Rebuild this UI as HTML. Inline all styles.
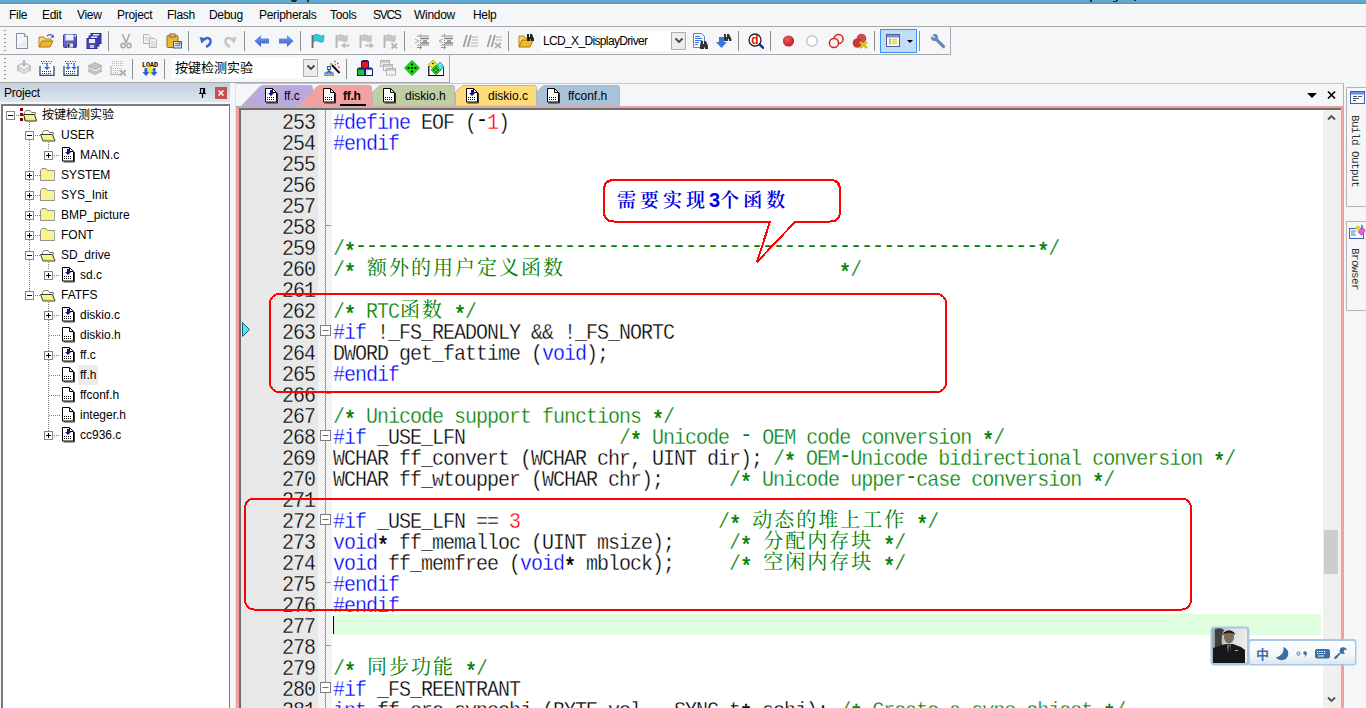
<!DOCTYPE html>
<html lang="zh"><head><meta charset="utf-8"><title>uVision</title>
<style>
*{box-sizing:border-box;margin:0;padding:0}
html,body{width:1366px;height:708px;overflow:hidden;background:#f5f6f7}
body{position:relative;font-family:"Liberation Sans","Noto Sans CJK SC",sans-serif;font-size:12px;color:#000}
.abs{position:absolute}
#topstrip{left:0;top:0;width:1366px;height:4px;background:#62a8ce;border-bottom:1px solid #5396ba}
.hl{position:absolute;height:1px;background:#a8a8a8}
.vl{position:absolute;width:1px;background:#a8a8a8}
.menu span{position:absolute;top:8px;font-size:12px;line-height:14px;white-space:nowrap;color:#000;letter-spacing:-.3px}
.sep{position:absolute;width:1px;height:20px;background:#8d8d8d}
.grip{position:absolute;width:2px;height:21px;background:repeating-linear-gradient(#9a9a9a 0 1px,transparent 1px 4px)}
.ico{position:absolute;width:16px;height:16px}
.combo{position:absolute;background:#fff;height:20px;font-size:12px;line-height:20px;white-space:nowrap}
.cbtn{position:absolute;width:15px;height:18px;background:#ececec;border:1px solid #adadad}
/* project */
#phead{left:0;top:83px;width:230px;height:19px;background:linear-gradient(#c2cfde,#dde6f0)}
#ptree{left:1px;top:104px;width:229px;height:606px;background:#fff;border:2px solid #7a7a7a;border-right-width:1px;border-bottom:0}
.tr{position:absolute;height:20px;line-height:20px;font-size:12px;white-space:nowrap}
/* editor */
#edwrap{left:236px;top:106px;width:1108px;height:610px;background:#f0a0a0}
#ed{left:239px;top:108px;width:1102px;height:610px;background:#fff;border-top:2px solid #6d6d6d;border-left:2px solid #6d6d6d}
#gutter{left:241px;top:110px;width:77px;height:600px;background:#e8e8e8}
#foldm{left:318px;top:110px;width:14px;height:600px;background:conic-gradient(#e8e8e8 25%,#fff 0 50%,#e8e8e8 0 75%,#fff 0) 0 0/2px 2px}
#foldline{left:325px;top:110px;width:1px;height:600px;background:#9a9a9a}
.num{position:absolute;left:241px;width:74px;text-align:right;font:20px/21px "Liberation Mono",monospace;letter-spacing:-1px;color:#000;height:21px;white-space:pre;transform:scaleY(1.1);transform-origin:0 0}
.cl{position:absolute;left:333px;font:20px/21px "Liberation Mono",monospace;letter-spacing:-1px;color:#000;height:21px;white-space:pre;transform:scaleY(1.1);transform-origin:0 0}
.cl{-webkit-text-stroke:.3px #fff}
.num{-webkit-text-stroke:.3px #e8e8e8}
.cl b{font-weight:normal;color:#0000ff}
.cl i{font-style:normal;color:#008000}
.cl u{text-decoration:none;color:#ff0000}
.cl .h{position:relative;top:-2px;-webkit-text-stroke:0}
.cl em{font-style:normal;position:relative;top:3px;-webkit-text-stroke:.5px currentColor}
.cl s{-webkit-text-stroke:0;text-decoration:none;font:400 20px/0 "Liberation Serif","Noto Serif CJK SC",serif;letter-spacing:2px;padding-left:1px;margin-right:-1px;color:#008000;display:inline-block;transform:scaleY(.91);vertical-align:baseline}
</style></head>
<body>
<div id="topstrip" class="abs"></div><div class="abs" style="left:0;top:4px;width:1366px;height:1px;background:#fdfdfd"></div>
<div class="abs" style="left:291px;top:0px;width:6px;height:1px;background:#2a2a30"></div>
<div class="abs" style="left:292px;top:1px;width:4px;height:1px;background:#2a2a30"></div>
<div class="abs" style="left:307px;top:0px;width:2px;height:2px;background:#2a2a30"></div>
<div class="abs" style="left:1090px;top:0px;width:2px;height:2px;background:#2a2a30"></div>
<div class="abs" style="left:1113px;top:1px;width:4px;height:1px;background:#2a2a30"></div>
<div class="abs" style="left:1116px;top:0px;width:2px;height:1px;background:#2a2a30"></div>
<div class="abs" style="left:1134px;top:0px;width:2px;height:1px;background:#2a2a30"></div>
<div class="menu"><span style="left:9px">File</span><span style="left:42px">Edit</span><span style="left:77px">View</span><span style="left:117px">Project</span><span style="left:167px">Flash</span><span style="left:209px">Debug</span><span style="left:259px">Peripherals</span><span style="left:330px">Tools</span><span style="left:373px"><span style="position:static;letter-spacing:-1.300px">SVCS</span></span><span style="left:414px">Window</span><span style="left:473px">Help</span></div>
<div class="hl" style="left:0;top:26px;width:1366px"></div>
<div class="hl" style="left:0;top:54px;width:951px"></div>
<div class="vl" style="left:950px;top:26px;height:29px"></div>
<div class="hl" style="left:0;top:82px;width:450px"></div>
<div class="hl" style="left:236px;top:83px;width:1108px;background:#c6c6c6"></div>
<div class="vl" style="left:449px;top:55px;height:28px"></div>
<div id="edwrap" class="abs"></div><div id="ed" class="abs"></div><div id="gutter" class="abs"></div><div id="foldm" class="abs"></div><div id="foldline" class="abs"></div>
<div class="abs" style="left:333px;top:614px;width:988px;height:21px;background:#dfffdf"></div>
<div class="num" style="top:111px">253</div>
<div class="cl" style="top:111px"><b>#define</b> EOF (<span class="h">-</span><u>1</u>)</div>
<div class="num" style="top:132px">254</div>
<div class="cl" style="top:132px"><b>#endif</b></div>
<div class="num" style="top:153px">255</div>
<div class="num" style="top:174px">256</div>
<div class="num" style="top:195px">257</div>
<div class="num" style="top:216px">258</div>
<div class="num" style="top:237px">259</div>
<div class="cl" style="top:237px"><i>/<em>*</em><span class="h">--------------------------------------------------------------</span><em>*</em>/</i></div>
<div class="num" style="top:258px">260</div>
<div class="cl" style="top:258px"><i>/<em>*</em> <s>额外的用户定义函数</s>                         <em>*</em>/</i></div>
<div class="num" style="top:279px">261</div>
<div class="num" style="top:300px">262</div>
<div class="cl" style="top:300px"><i>/<em>*</em> RTC<s>函数</s> <em>*</em>/</i></div>
<div class="num" style="top:321px">263</div>
<div class="cl" style="top:321px"><b>#if</b> !_FS_READONLY &amp;&amp; !_FS_NORTC</div>
<div class="num" style="top:342px">264</div>
<div class="cl" style="top:342px">DWORD get_fattime (<b>void</b>);</div>
<div class="num" style="top:363px">265</div>
<div class="cl" style="top:363px"><b>#endif</b></div>
<div class="num" style="top:384px">266</div>
<div class="num" style="top:405px">267</div>
<div class="cl" style="top:405px"><i>/<em>*</em> Unicode support functions <em>*</em>/</i></div>
<div class="num" style="top:426px">268</div>
<div class="cl" style="top:426px"><b>#if</b> _USE_LFN              <i>/<em>*</em> Unicode <span class="h">-</span> OEM code conversion <em>*</em>/</i></div>
<div class="num" style="top:447px">269</div>
<div class="cl" style="top:447px">WCHAR ff_convert (WCHAR chr, UINT dir); <i>/<em>*</em> OEM<span class="h">-</span>Unicode bidirectional conversion <em>*</em>/</i></div>
<div class="num" style="top:468px">270</div>
<div class="cl" style="top:468px">WCHAR ff_wtoupper (WCHAR chr);      <i>/<em>*</em> Unicode upper<span class="h">-</span>case conversion <em>*</em>/</i></div>
<div class="num" style="top:489px">271</div>
<div class="num" style="top:510px">272</div>
<div class="cl" style="top:510px"><b>#if</b> _USE_LFN == <u>3</u>                  <i>/<em>*</em> <s>动态的堆上工作</s> <em>*</em>/</i></div>
<div class="num" style="top:531px">273</div>
<div class="cl" style="top:531px"><b>void</b><em>*</em> ff_memalloc (UINT msize);     <i>/<em>*</em> <s>分配内存块</s> <em>*</em>/</i></div>
<div class="num" style="top:552px">274</div>
<div class="cl" style="top:552px"><b>void</b> ff_memfree (<b>void</b><em>*</em> mblock);     <i>/<em>*</em> <s>空闲内存块</s> <em>*</em>/</i></div>
<div class="num" style="top:573px">275</div>
<div class="cl" style="top:573px"><b>#endif</b></div>
<div class="num" style="top:594px">276</div>
<div class="cl" style="top:594px"><b>#endif</b></div>
<div class="num" style="top:615px">277</div>
<div class="num" style="top:636px">278</div>
<div class="num" style="top:657px">279</div>
<div class="cl" style="top:657px"><i>/<em>*</em> <s>同步功能</s> <em>*</em>/</i></div>
<div class="num" style="top:678px">280</div>
<div class="cl" style="top:678px"><b>#if</b> _FS_REENTRANT</div>
<div class="num" style="top:699px">281</div>
<div class="cl" style="top:699px"><b>int</b> ff_cre_syncobj (BYTE vol, _SYNC_t<em>*</em> sobj); <i>/<em>*</em> Create a sync object <em>*</em>/</i></div>
<svg class="abs" style="left:14px;top:33px" width="16" height="16" viewBox="0 0 16 16" ><path d="M2.5 .5h8l3 3v12h-11z" fill="#f4f6fb" stroke="#8a8fa0"/><path d="M10.5 .5v3h3" fill="#fff" stroke="#8a8fa0"/><path d="M4 13l8-6v7H4z" fill="#dfe4f2" opacity=".7"/></svg>
<svg class="abs" style="left:38px;top:33px" width="16" height="16" viewBox="0 0 16 16" ><path d="M1 14V4h5l1 2h6v3" fill="#f6d77a" stroke="#b8860b"/><path d="M1 14l3-6h11l-3 6z" fill="#f2b632" stroke="#a8760a"/><path d="M9 3c2-2 5-2 6 1" fill="none" stroke="#3a62b8" stroke-width="1.3"/><path d="M15.8 1.5v3.3h-3.3z" fill="#3a62b8"/></svg>
<svg class="abs" style="left:62px;top:33px" width="16" height="16" viewBox="0 0 16 16" ><defs><linearGradient id="sg" x1="0" y1="0" x2="1" y2="1"><stop offset="0" stop-color="#8080e0"/><stop offset="1" stop-color="#3c3cb0"/></linearGradient></defs><rect x="1.500" y="1.500" width="13" height="13" rx="1" fill="url(#sg)" stroke="#4040a8"/><rect x="3.5" y="1.5" width="8" height="6" fill="#eef0f8"/><rect x="5" y="10.5" width="6" height="4" fill="#e0e0e8"/><rect x="5.5" y="11" width="2" height="3" fill="#222"/><rect x="12.5" y="2" width="1.5" height="2" fill="#ddd"/></svg>
<svg class="abs" style="left:86px;top:33px" width="16" height="16" viewBox="0 0 16 16" ><rect x="5" y="0.5" width="10" height="10" fill="#4a4ac0" stroke="#2a2a90"/><rect x="7" y="1" width="6" height="3" fill="#eef0f8"/><rect x="3" y="3" width="10" height="10" fill="#5555c8" stroke="#2a2a90"/><rect x="5" y="3.5" width="6" height="3" fill="#eef0f8"/><rect x="1" y="5.5" width="10" height="10" fill="#4a4ac0" stroke="#2a2a90"/><rect x="3" y="6" width="6" height="4" fill="#eef0f8"/><rect x="4" y="12" width="4" height="3" fill="#ccc"/></svg>
<svg class="abs" style="left:118px;top:33px" width="16" height="16" viewBox="0 0 16 16" ><path d="M4.5 1L8 10M11.5 1L8 10" stroke="#a8a8a8" stroke-width="1.6" fill="none"/><circle cx="5" cy="12.5" r="2.2" fill="#e8e8e8" stroke="#a8a8a8" stroke-width="1.4"/><circle cx="11" cy="12.5" r="2.2" fill="#e8e8e8" stroke="#a8a8a8" stroke-width="1.4"/></svg>
<svg class="abs" style="left:142px;top:33px" width="16" height="16" viewBox="0 0 16 16" ><path d="M1.5 1.5h5l2 2v7h-7z" fill="#f2f2f2" stroke="#b4b4b4"/><path d="M7.5 5.5h5l2 2v7h-7z" fill="#f2f2f2" stroke="#b4b4b4"/><path d="M3 5h4M3 7h3M9 9h4M9 11h4M9 13h4" stroke="#c8c8c8"/></svg>
<svg class="abs" style="left:166px;top:33px" width="16" height="16" viewBox="0 0 16 16" ><rect x="1" y="2.5" width="11" height="12" rx="1" fill="#e8b83a" stroke="#9a6a10"/><rect x="4" y="1" width="5" height="3" fill="#d8c890" stroke="#8a6a20"/><rect x="7.5" y="8.5" width="8" height="6.5" fill="#dfe6f4" stroke="#50587a"/><path d="M9 10.5h3M9 12.5h5" stroke="#6078b0"/><rect x="12.5" y="9.5" width="2" height="2" fill="#50587a"/></svg>
<svg class="abs" style="left:198px;top:33px" width="16" height="16" viewBox="0 0 16 16" ><path d="M6 7c2.500-3.500 7-2 6.500 2c-.4 2.500-2 4-4.500 4.800" fill="none" stroke="#3a62d8" stroke-width="2.400"/><path d="M1.500 4L8.500 5.500L3.500 10.500z" fill="#3a62d8"/></svg>
<svg class="abs" style="left:222px;top:33px" width="16" height="16" viewBox="0 0 16 16" ><path d="M10 7c-2.500-3.500-7-2-6.500 2c.4 2.500 2 4 4.500 4.800" fill="none" stroke="#c4c4c4" stroke-width="2.400"/><path d="M14.500 4L7.500 5.500L12.500 10.500z" fill="#c4c4c4"/></svg>
<svg class="abs" style="left:254px;top:33px" width="16" height="16" viewBox="0 0 16 16" ><defs><linearGradient id="gb" x1="0" y1="0" x2="0" y2="1"><stop offset="0" stop-color="#7c9cf0"/><stop offset="1" stop-color="#3a5cd0"/></linearGradient></defs><path d="M0.500 8L7 2v3.500h8v5H7V14z" fill="url(#gb)"/></svg>
<svg class="abs" style="left:278px;top:33px" width="16" height="16" viewBox="0 0 16 16" ><defs><linearGradient id="gf" x1="0" y1="0" x2="0" y2="1"><stop offset="0" stop-color="#7c9cf0"/><stop offset="1" stop-color="#3a5cd0"/></linearGradient></defs><path d="M15.500 8L9 2v3.500H1v5h8V14z" fill="url(#gf)"/></svg>
<svg class="abs" style="left:310px;top:33px" width="16" height="16" viewBox="0 0 16 16" ><path d="M2.500 2v13" stroke="#686868" stroke-width="1.800"/><path d="M3.500 2.500c2-1.500 3.500-1.500 5.500-.5s3.500 1 5 0l-.5 6.500c-1.500 1-3 1-5 0s-3.500-.8-5 .5z" fill="#38c4dc" stroke="#1a98b0" stroke-width=".6"/></svg>
<svg class="abs" style="left:334px;top:33px" width="16" height="16" viewBox="0 0 16 16" ><path d="M2.500 2v13" stroke="#b4b4b4" stroke-width="1.800"/><path d="M3.500 2.500c2-1.500 3.500-1.500 5.500-.5s3.500 1 5 0l-.5 6.500c-1.500 1-3 1-5 0s-3.500-.8-5 .5z" fill="#c6c6c6"/><path d="M7 12.500l4-3v2h4.500v2H11v2z" fill="#bcbcbc"/></svg>
<svg class="abs" style="left:358px;top:33px" width="16" height="16" viewBox="0 0 16 16" ><path d="M2.500 2v13" stroke="#b4b4b4" stroke-width="1.800"/><path d="M3.500 2.500c2-1.500 3.500-1.500 5.500-.5s3.500 1 5 0l-.5 6.500c-1.500 1-3 1-5 0s-3.500-.8-5 .5z" fill="#c6c6c6"/><path d="M16 12.500l-4-3v2H7.500v2H12v2z" fill="#bcbcbc"/></svg>
<svg class="abs" style="left:382px;top:33px" width="16" height="16" viewBox="0 0 16 16" ><path d="M2.500 2v13" stroke="#b4b4b4" stroke-width="1.800"/><path d="M3.500 2.500c2-1.500 3.500-1.500 5.500-.5s3.500 1 5 0l-.5 6.500c-1.500 1-3 1-5 0s-3.500-.8-5 .5z" fill="#c6c6c6"/><path d="M9.500 10.500l5.500 5M15 10.500l-5.500 5" stroke="#b4b4b4" stroke-width="2"/></svg>
<svg class="abs" style="left:414px;top:33px" width="16" height="16" viewBox="0 0 16 16" ><path d="M3 3h12M3 12h12M3 14.500h5" stroke="#909090"/><path d="M7 5.500h8M9 8h4M7 10h8" stroke="#808080" stroke-width="1.6"/><path d="M6.500 1v15" stroke="#808080" stroke-dasharray="1 1"/><path d="M1 6l4 2l-4 2" stroke="#a8a8a8" fill="none"/></svg>
<svg class="abs" style="left:438px;top:33px" width="16" height="16" viewBox="0 0 16 16" ><path d="M3 3h12M3 12h12M3 14.500h5" stroke="#909090"/><path d="M7 5.500h8M9 8h4M7 10h8" stroke="#808080" stroke-width="1.6"/><path d="M6.500 1v15" stroke="#808080" stroke-dasharray="1 1"/><path d="M5 6l-4 2l4 2" stroke="#a8a8a8" fill="none"/></svg>
<svg class="abs" style="left:462px;top:33px" width="16" height="16" viewBox="0 0 16 16" ><path d="M5 2L1.500 14M9 2L5.500 14" stroke="#a0a0a0" stroke-width="1.800"/><path d="M10 4h6M10 7h6M9 10h7M8 13h8" stroke="#b0b0b0"/></svg>
<svg class="abs" style="left:486px;top:33px" width="16" height="16" viewBox="0 0 16 16" ><path d="M5 2L1.500 14M9 2L5.500 14" stroke="#a0a0a0" stroke-width="1.800"/><path d="M10 4h6M10 7h6" stroke="#b0b0b0"/><path d="M9 10l6 5M15 10l-6 5" stroke="#b0b0b0" stroke-width="1.800"/></svg>
<svg class="abs" style="left:518px;top:33px" width="16" height="16" viewBox="0 0 16 16" ><path d="M1 14V3h5l1 2h6v3" fill="#f6d77a" stroke="#b8860b"/><path d="M1 14l3-7h11l-3 7z" fill="#f2b632" stroke="#a8760a"/><path d="M9 1h2v3h1V1h2l2 5v2h-3V6h-1v2H9V6z" fill="#222"/></svg>
<svg class="abs" style="left:692px;top:33px" width="16" height="16" viewBox="0 0 16 16" ><path d="M1.500 .500h8l3 3v11h-11z" fill="#f4f8ff" stroke="#5a80c8"/><path d="M3 3.500h5M3 5.500h7M3 7.500h7M3 9.500h4M3 11.500h3" stroke="#3a7ae0" stroke-width="1"/><path d="M9 8h2v3h1V8h2l2 5v3h-3v-2h-1v2H8v-3z" fill="#333"/></svg>
<svg class="abs" style="left:716px;top:33px" width="16" height="16" viewBox="0 0 16 16" ><path d="M3 4h5v5h3l-5.500 6L0 9h3z" fill="#3a74e0"/><path d="M8 1h2v3h1V1h2l2.500 5v2H13V6h-1v2H8V6z" fill="#333"/></svg>
<svg class="abs" style="left:748px;top:33px" width="16" height="16" viewBox="0 0 16 16" ><circle cx="7" cy="7" r="6" fill="#fff" stroke="#222" stroke-width="1.300"/><path d="M11 11l5 4.500" stroke="#1a2a9a" stroke-width="2.400"/><text x="3.200" y="11" font-family="Liberation Sans,sans-serif" font-weight="bold" font-size="12" fill="#f01010">d</text></svg>
<svg class="abs" style="left:781px;top:33px" width="16" height="16" viewBox="0 0 16 16" ><defs><radialGradient id="rg" cx=".4" cy=".35" r=".7"><stop offset="0" stop-color="#e86060"/><stop offset="1" stop-color="#b81818"/></radialGradient></defs><circle cx="7.500" cy="8" r="5.600" fill="url(#rg)"/></svg>
<svg class="abs" style="left:804px;top:33px" width="16" height="16" viewBox="0 0 16 16" ><circle cx="8" cy="8" r="5.200" fill="#fff" stroke="#c4c4c4" stroke-width="1.400"/></svg>
<svg class="abs" style="left:828px;top:33px" width="16" height="16" viewBox="0 0 16 16" ><circle cx="10.500" cy="6" r="4.600" fill="#fdeeee" stroke="#d02828" stroke-width="1.500"/><circle cx="6" cy="10" r="4.600" fill="#fdeeee" stroke="#d02828" stroke-width="1.500"/></svg>
<svg class="abs" style="left:852px;top:33px" width="16" height="16" viewBox="0 0 16 16" ><circle cx="9.500" cy="5.500" r="4.800" fill="#d04848"/><circle cx="5.500" cy="10" r="4.800" fill="#c83838"/><path d="M8 9l7 6M15 9l-7 6" stroke="#d8c020" stroke-width="2.400"/></svg>
<svg class="abs" style="left:930px;top:33px" width="16" height="16" viewBox="0 0 16 16" ><path d="M3 2c2-1.500 4-.5 4.500 1.500c.3 1-.2 2 .5 2.800l6.500 6.500c1 1-.8 2.800-1.800 1.800L6.200 8c-.8-.7-2-.2-3-.6C1.500 6.800 1 5 1.800 3.500L4 5.600l1.700-1.500z" fill="#6a88b8" stroke="#48689a" stroke-width=".6"/></svg>
<div class="sep" style="left:108px;top:31px"></div>
<div class="sep" style="left:188px;top:31px"></div>
<div class="sep" style="left:244px;top:31px"></div>
<div class="sep" style="left:300px;top:31px"></div>
<div class="sep" style="left:404px;top:31px"></div>
<div class="sep" style="left:508px;top:31px"></div>
<div class="sep" style="left:738px;top:31px"></div>
<div class="sep" style="left:770px;top:31px"></div>
<div class="sep" style="left:874px;top:31px"></div>
<div class="sep" style="left:919px;top:31px"></div>
<div class="grip" style="left:4px;top:30px"></div><div class="grip" style="left:4px;top:58px"></div>
<div class="abs" style="left:880px;top:29px;width:37px;height:24px;background:#c2dcf8;border:1px solid #3a94f0"></div>
<svg class="abs" style="left:886px;top:34px" width="14" height="13" viewBox="0 0 14 13" ><rect x=".500" y=".500" width="13" height="12" fill="#fff" stroke="#4860a0"/><rect x="1" y="1" width="12" height="2.500" fill="#7090e0"/><path d="M3 5.500h2M3 7.500h2M3 9.500h2" stroke="#b0b020" stroke-width="1.400"/><path d="M6 5.500h5M6 7.500h5M6 9.500h5" stroke="#d8e020" stroke-width="1.400"/></svg>
<div class="abs" style="left:907px;top:40px;width:0;height:0;border:3px solid transparent;border-top:3px solid #000;border-bottom:0"></div>
<div class="combo" style="left:541px;top:31px;width:146px;padding-left:2px;letter-spacing:-.65px">LCD_X_DisplayDriver</div>
<div class="cbtn" style="left:671px;top:32px"></div>
<svg class="abs" style="left:674px;top:37px" width="10" height="8" viewBox="0 0 10 8" ><path d="M1.500 1.500L5 5L8.500 1.500" fill="none" stroke="#444" stroke-width="1.800"/></svg>
<svg class="abs" style="left:16px;top:60px" width="16" height="16" viewBox="0 0 16 16" ><path d="M1 10l7-3.500l7 3.500l-7 3.500z" fill="#fff" stroke="#b4b4b4"/><path d="M1 8l7-3.500l7 3.500l-7 3.500z" fill="#fff" stroke="#b4b4b4"/><path d="M1 6l7-3.500l7 3.500l-7 3.500z" fill="#f4f4f4" stroke="#b4b4b4"/><path d="M7 0h2v4h2l-3 3l-3-3h2z" fill="#b8b8b8"/></svg>
<svg class="abs" style="left:39px;top:60px" width="16" height="16" viewBox="0 0 16 16" ><path d="M1 6v9.500h14V6" fill="#fff" stroke="#2a4a80" stroke-width="1.300"/><path d="M3 11.500h10M3 13.500h10" stroke="#2a3a70" stroke-width="1.200" stroke-dasharray="1 1"/><path d="M2 1.500h12M3 3.500h10" stroke="#2a3a70" stroke-dasharray="1 1.500"/><path d="M7.300 3h1.400v4h2.300l-3 3l-3-3h2.300z" fill="#2a6ae8"/></svg>
<svg class="abs" style="left:63px;top:60px" width="16" height="16" viewBox="0 0 16 16" ><path d="M1 6v9.500h14V6" fill="#fff" stroke="#2a4a80" stroke-width="1.300"/><path d="M3 11.500h10M3 13.500h10" stroke="#2a3a70" stroke-width="1.200" stroke-dasharray="1 1"/><path d="M2 1.500h12M3 3.500h10" stroke="#2a3a70" stroke-dasharray="1 1.500"/><path d="M4.400 3h1.300v4h2l-2.700 3l-2.700-3h2.100zM10.400 3h1.300v4h2l-2.700 3l-2.700-3h2.100z" fill="#2a6ae8"/></svg>
<svg class="abs" style="left:87px;top:60px" width="16" height="16" viewBox="0 0 16 16" ><path d="M1 11l7-3.500l7 3.500l-7 3.500z" fill="#c8c8c8" stroke="#b0b0b0"/><path d="M1 8.500l7-3.500l7 3.500l-7 3.500z" fill="#f0f0f0" stroke="#b8b8b8"/><path d="M1 6l7-3.500l7 3.500l-7 3.500z" fill="#c4c4c4" stroke="#b0b0b0"/></svg>
<svg class="abs" style="left:110px;top:60px" width="16" height="16" viewBox="0 0 16 16" ><path d="M1 6v8.500h10" fill="none" stroke="#b8b8b8" stroke-width="1.300"/><path d="M2 1.500h12M2 3.500h12M2 5.500h12M3 8.500h10M3 10.500h8M3 12.500h6" stroke="#b8b8b8" stroke-dasharray="1 1"/><path d="M10 10l6 5.500M16 10l-6 5.500" stroke="#b0b0b0" stroke-width="2"/></svg>
<svg class="abs" style="left:142px;top:60px" width="16" height="16" viewBox="0 0 16 16" ><text x="0" y="6.500" font-family="Liberation Mono,monospace" font-weight="bold" font-size="6.700" letter-spacing="0" fill="#000">LOAD</text><path d="M2.500 8h3v4h2l-3.500 4l-3.500-4h2zM10.500 8h3v4h2l-3.500 4l-3.500-4h2z" fill="#2a5ad8"/><path d="M8 6.500l1 2.200l2.300-.6l-1.200 2l1.600 1.700l-2.300.2l-.4 2.400L8 12.500l-1-.1-.4-2.400l-2.300-.2l1.600-1.700l-1.200-2l2.300.6z" fill="#f0f020" stroke="#c8c800" stroke-width=".4"/></svg>
<svg class="abs" style="left:324px;top:60px" width="16" height="16" viewBox="0 0 16 16" ><path d="M6.500 3.500l9 9.500" stroke="#111" stroke-width="2"/><path d="M6 3l2 2" stroke="#e8c828" stroke-width="2.200"/><path d="M10 1.500h1.500M13 3.500h1.500M14 7h1.500M11 4.500h1" stroke="#e03030" stroke-width="1.300"/><path d="M5 9v3M2.500 12h5M2.500 12v2M7.500 12v2" stroke="#2a5ad8" fill="none"/><rect x="3.500" y="6.500" width="3" height="3" fill="#e8e070" stroke="#2a5ad8"/><rect x="1" y="13" width="3" height="3" fill="#e8e070" stroke="#2a5ad8"/><rect x="6" y="13" width="3" height="3" fill="#e8e070" stroke="#2a5ad8"/><path d="M5 10l1.500 1.500L5 13l-1.500-1.500z" fill="#405080"/></svg>
<svg class="abs" style="left:357px;top:60px" width="16" height="16" viewBox="0 0 16 16" ><path d="M4.500 1.500l1-1.500h5l1 1.500z" fill="#102080"/><rect x="4.500" y="1.500" width="7" height="7" fill="#e81818" stroke="#102080"/><path d="M.500 9l1-1.500h6l-1 1.500zM8.500 9l1-1.500h5l1 1.500z" fill="#102080"/><rect x=".500" y="9" width="7" height="6.500" fill="#18c828" stroke="#102080"/><rect x="8.500" y="9" width="7" height="6.500" fill="#e8e8e8" stroke="#102080"/><rect x="11" y="11" width="3.500" height="3.500" fill="#fff"/></svg>
<svg class="abs" style="left:380px;top:60px" width="16" height="16" viewBox="0 0 16 16" ><rect x=".500" y=".500" width="9" height="6" fill="#f0f0f0" stroke="#b4b4b4"/><rect x="3.500" y="4.500" width="9" height="6" fill="#f0f0f0" stroke="#b4b4b4"/><rect x="6.500" y="8.500" width="9" height="6.500" fill="#f4f4f4" stroke="#b4b4b4"/><path d="M1 2h8M4 6h8M7 10h8" stroke="#c0c0c0" stroke-width="1.600"/></svg>
<svg class="abs" style="left:404px;top:60px" width="16" height="16" viewBox="0 0 16 16" ><path d="M8 .500L15.500 8L8 15.500L.500 8z" fill="#10e010" stroke="#0a8a0a" stroke-width=".8"/><circle cx="8" cy="4.500" r="1.100"/><circle cx="4.500" cy="8" r="1.100"/><circle cx="11.500" cy="8" r="1.100"/><circle cx="8" cy="11.500" r="1.100"/><circle cx="8" cy="8" r="1.100"/></svg>
<svg class="abs" style="left:428px;top:60px" width="16" height="16" viewBox="0 0 16 16" ><path d="M.800 6v9.500h15V6" fill="#fff" stroke="#000" stroke-width="1.200"/><path d="M5 0l4.500 4.500L5 9L.500 4.500z" fill="#e8e838" stroke="#88881a" stroke-width=".6"/><path d="M12 2l4 4.500l-4 4.500l-4-4.500z" fill="#28e0e8" stroke="#1a8a90" stroke-width=".6"/><path d="M8 5l5 5l-5 5l-5-5z" fill="#30d830" stroke="#0a7a0a" stroke-width=".6"/><circle cx="5" cy="3.500" r=".8"/><circle cx="8" cy="8" r=".8"/><circle cx="6" cy="10" r=".8"/><circle cx="10" cy="10" r=".8"/><circle cx="8" cy="12" r=".8"/><circle cx="12" cy="5" r=".8" fill="#fff"/><circle cx="12" cy="8" r=".8" fill="#fff"/></svg>
<div class="sep" style="left:132px;top:59px"></div>
<div class="sep" style="left:164px;top:59px"></div>
<div class="sep" style="left:346px;top:59px"></div>
<div class="combo" style="left:172px;top:58px;width:146px;padding-left:3px;font-size:13px">按键检测实验</div>
<div class="cbtn" style="left:303px;top:59px"></div>
<svg class="abs" style="left:306px;top:64px" width="10" height="8" viewBox="0 0 10 8" ><path d="M1.500 1.500L5 5L8.500 1.500" fill="none" stroke="#444" stroke-width="1.800"/></svg>
<div id="phead" class="abs"></div><div class="abs" style="left:4px;top:86px;font-size:12px;line-height:14px;letter-spacing:-.2px">Project</div>
<svg class="abs" style="left:198px;top:88px" width="9" height="10" viewBox="0 0 9 10" ><path d="M2.500 .500h4v5h-4zM5.500 .500v5M1 5.500h7M4.500 6v4" fill="none" stroke="#000" stroke-width="1.200"/></svg>
<div class="abs" style="left:215px;top:87px;width:12px;height:12px;background:#c94f4f"></div>
<svg class="abs" style="left:218px;top:90px" width="6" height="6" viewBox="0 0 6 6" ><path d="M.500 .500l5 5M5.500 .500l-5 5" stroke="#fff" stroke-width="1.500"/></svg>
<div id="ptree" class="abs"></div>
<div class="abs" style="left:231px;top:83px;width:5px;height:630px;background:#f5f6f7"></div>
<div class="abs" style="left:29px;top:122px;width:1px;height:8px;background:repeating-linear-gradient(#808080 0 1px,transparent 1px 2px)"></div>
<div class="abs" style="left:29px;top:140px;width:1px;height:151px;background:repeating-linear-gradient(#808080 0 1px,transparent 1px 2px)"></div>
<div class="abs" style="left:48px;top:142px;width:1px;height:8px;background:repeating-linear-gradient(#808080 0 1px,transparent 1px 2px)"></div>
<div class="abs" style="left:48px;top:262px;width:1px;height:8px;background:repeating-linear-gradient(#808080 0 1px,transparent 1px 2px)"></div>
<div class="abs" style="left:48px;top:302px;width:1px;height:133px;background:repeating-linear-gradient(#808080 0 1px,transparent 1px 2px)"></div>
<svg class="abs" style="left:6px;top:111px" width="9" height="9" viewBox="0 0 9 9" ><rect x=".500" y=".500" width="8" height="8" fill="#fff" stroke="#848484"/><path d="M2 4.500h5" stroke="#000"/></svg>
<div class="abs" style="left:16px;top:115px;width:5px;height:1px;background:repeating-linear-gradient(90deg,#808080 0 1px,transparent 1px 2px)"></div>
<svg class="abs" style="left:20px;top:108px" width="18" height="14" viewBox="0 0 18 14" ><path d="M4.500 12.500v-8l1.500-2h4l1.500 2h4v2" fill="#ffffd8" stroke="#808080"/><path d="M3.500 6.500h11l2 6.500h-11z" fill="#f0f060" stroke="#303030"/><path d="M5 8h9M6 10h9" stroke="#fff" stroke-dasharray="1 1"/><rect x="0" y="0" width="3" height="3" fill="#800000"/><rect x="0" y="5" width="3" height="3" fill="#a00000"/><rect x="0" y="10" width="3" height="3" fill="#800000"/></svg>
<div class="tr" style="left:42px;top:105px">按键检测实验</div>
<svg class="abs" style="left:25px;top:131px" width="9" height="9" viewBox="0 0 9 9" ><rect x=".500" y=".500" width="8" height="8" fill="#fff" stroke="#848484"/><path d="M2 4.500h5" stroke="#000"/></svg>
<div class="abs" style="left:35px;top:135px;width:5px;height:1px;background:repeating-linear-gradient(90deg,#808080 0 1px,transparent 1px 2px)"></div>
<svg class="abs" style="left:40px;top:128px" width="16" height="14" viewBox="0 0 16 14" ><path d="M2.500 12.500v-8l1.500-2h4l1.500 2h4v2" fill="#ffffc8" stroke="#808080"/><path d="M.500 6.500h12l2.500 6.500h-12z" fill="#f0f060" stroke="#404040"/><path d="M2 8h10M3 10h10" stroke="#fff" stroke-dasharray="1 1"/></svg>
<div class="tr" style="left:61px;top:125px">USER</div>
<svg class="abs" style="left:44px;top:151px" width="9" height="9" viewBox="0 0 9 9" ><rect x=".500" y=".500" width="8" height="8" fill="#fff" stroke="#848484"/><path d="M2 4.500h5" stroke="#000"/><path d="M4.500 2v5" stroke="#000"/></svg>
<div class="abs" style="left:54px;top:155px;width:6px;height:1px;background:repeating-linear-gradient(90deg,#808080 0 1px,transparent 1px 2px)"></div>
<svg class="abs" style="left:62px;top:147px" width="14" height="16" viewBox="0 0 14 16" ><path d="M.500 .500h7l4 4v9.500h-11z" fill="#fff" stroke="#000"/><path d="M7.500 .500v4h4" fill="none" stroke="#000"/><path d="M12.500 5v10h-11" fill="none" stroke="#000" stroke-opacity=".75"/><path d="M2 9.500h8M2 11.500h8" stroke="#000" stroke-dasharray="1 1"/><path d="M5 2h2v3h2l-3 3l-3-3h2z" fill="#10108a"/></svg>
<div class="tr" style="left:80px;top:145px">MAIN.c</div>
<svg class="abs" style="left:25px;top:171px" width="9" height="9" viewBox="0 0 9 9" ><rect x=".500" y=".500" width="8" height="8" fill="#fff" stroke="#848484"/><path d="M2 4.500h5" stroke="#000"/><path d="M4.500 2v5" stroke="#000"/></svg>
<div class="abs" style="left:35px;top:175px;width:5px;height:1px;background:repeating-linear-gradient(90deg,#808080 0 1px,transparent 1px 2px)"></div>
<svg class="abs" style="left:40px;top:167px" width="16" height="15" viewBox="0 0 16 15" ><path d="M.500 13.500v-10l1.500-2h4l1.500 2h7v10z" fill="#f4f470" stroke="#909090"/><path d="M1.500 5h13M1.500 7h13M1.500 9h13M1.500 11h13" stroke="#fff" stroke-dasharray="1 1" opacity=".8"/></svg>
<div class="tr" style="left:61px;top:165px">SYSTEM</div>
<svg class="abs" style="left:25px;top:191px" width="9" height="9" viewBox="0 0 9 9" ><rect x=".500" y=".500" width="8" height="8" fill="#fff" stroke="#848484"/><path d="M2 4.500h5" stroke="#000"/><path d="M4.500 2v5" stroke="#000"/></svg>
<div class="abs" style="left:35px;top:195px;width:5px;height:1px;background:repeating-linear-gradient(90deg,#808080 0 1px,transparent 1px 2px)"></div>
<svg class="abs" style="left:40px;top:187px" width="16" height="15" viewBox="0 0 16 15" ><path d="M.500 13.500v-10l1.500-2h4l1.500 2h7v10z" fill="#f4f470" stroke="#909090"/><path d="M1.500 5h13M1.500 7h13M1.500 9h13M1.500 11h13" stroke="#fff" stroke-dasharray="1 1" opacity=".8"/></svg>
<div class="tr" style="left:61px;top:185px">SYS_Init</div>
<svg class="abs" style="left:25px;top:211px" width="9" height="9" viewBox="0 0 9 9" ><rect x=".500" y=".500" width="8" height="8" fill="#fff" stroke="#848484"/><path d="M2 4.500h5" stroke="#000"/><path d="M4.500 2v5" stroke="#000"/></svg>
<div class="abs" style="left:35px;top:215px;width:5px;height:1px;background:repeating-linear-gradient(90deg,#808080 0 1px,transparent 1px 2px)"></div>
<svg class="abs" style="left:40px;top:207px" width="16" height="15" viewBox="0 0 16 15" ><path d="M.500 13.500v-10l1.500-2h4l1.500 2h7v10z" fill="#f4f470" stroke="#909090"/><path d="M1.500 5h13M1.500 7h13M1.500 9h13M1.500 11h13" stroke="#fff" stroke-dasharray="1 1" opacity=".8"/></svg>
<div class="tr" style="left:61px;top:205px">BMP_picture</div>
<svg class="abs" style="left:25px;top:231px" width="9" height="9" viewBox="0 0 9 9" ><rect x=".500" y=".500" width="8" height="8" fill="#fff" stroke="#848484"/><path d="M2 4.500h5" stroke="#000"/><path d="M4.500 2v5" stroke="#000"/></svg>
<div class="abs" style="left:35px;top:235px;width:5px;height:1px;background:repeating-linear-gradient(90deg,#808080 0 1px,transparent 1px 2px)"></div>
<svg class="abs" style="left:40px;top:227px" width="16" height="15" viewBox="0 0 16 15" ><path d="M.500 13.500v-10l1.500-2h4l1.500 2h7v10z" fill="#f4f470" stroke="#909090"/><path d="M1.500 5h13M1.500 7h13M1.500 9h13M1.500 11h13" stroke="#fff" stroke-dasharray="1 1" opacity=".8"/></svg>
<div class="tr" style="left:61px;top:225px">FONT</div>
<svg class="abs" style="left:25px;top:251px" width="9" height="9" viewBox="0 0 9 9" ><rect x=".500" y=".500" width="8" height="8" fill="#fff" stroke="#848484"/><path d="M2 4.500h5" stroke="#000"/></svg>
<div class="abs" style="left:35px;top:255px;width:5px;height:1px;background:repeating-linear-gradient(90deg,#808080 0 1px,transparent 1px 2px)"></div>
<svg class="abs" style="left:40px;top:248px" width="16" height="14" viewBox="0 0 16 14" ><path d="M2.500 12.500v-8l1.500-2h4l1.500 2h4v2" fill="#ffffc8" stroke="#808080"/><path d="M.500 6.500h12l2.500 6.500h-12z" fill="#f0f060" stroke="#404040"/><path d="M2 8h10M3 10h10" stroke="#fff" stroke-dasharray="1 1"/></svg>
<div class="tr" style="left:61px;top:245px">SD_drive</div>
<svg class="abs" style="left:44px;top:271px" width="9" height="9" viewBox="0 0 9 9" ><rect x=".500" y=".500" width="8" height="8" fill="#fff" stroke="#848484"/><path d="M2 4.500h5" stroke="#000"/><path d="M4.500 2v5" stroke="#000"/></svg>
<div class="abs" style="left:54px;top:275px;width:6px;height:1px;background:repeating-linear-gradient(90deg,#808080 0 1px,transparent 1px 2px)"></div>
<svg class="abs" style="left:62px;top:267px" width="14" height="16" viewBox="0 0 14 16" ><path d="M.500 .500h7l4 4v9.500h-11z" fill="#fff" stroke="#000"/><path d="M7.500 .500v4h4" fill="none" stroke="#000"/><path d="M12.500 5v10h-11" fill="none" stroke="#000" stroke-opacity=".75"/><path d="M2 9.500h8M2 11.500h8" stroke="#000" stroke-dasharray="1 1"/><path d="M5 2h2v3h2l-3 3l-3-3h2z" fill="#10108a"/></svg>
<div class="tr" style="left:80px;top:265px">sd.c</div>
<svg class="abs" style="left:25px;top:291px" width="9" height="9" viewBox="0 0 9 9" ><rect x=".500" y=".500" width="8" height="8" fill="#fff" stroke="#848484"/><path d="M2 4.500h5" stroke="#000"/></svg>
<div class="abs" style="left:35px;top:295px;width:5px;height:1px;background:repeating-linear-gradient(90deg,#808080 0 1px,transparent 1px 2px)"></div>
<svg class="abs" style="left:40px;top:288px" width="16" height="14" viewBox="0 0 16 14" ><path d="M2.500 12.500v-8l1.500-2h4l1.500 2h4v2" fill="#ffffc8" stroke="#808080"/><path d="M.500 6.500h12l2.500 6.500h-12z" fill="#f0f060" stroke="#404040"/><path d="M2 8h10M3 10h10" stroke="#fff" stroke-dasharray="1 1"/></svg>
<div class="tr" style="left:61px;top:285px">FATFS</div>
<svg class="abs" style="left:44px;top:311px" width="9" height="9" viewBox="0 0 9 9" ><rect x=".500" y=".500" width="8" height="8" fill="#fff" stroke="#848484"/><path d="M2 4.500h5" stroke="#000"/><path d="M4.500 2v5" stroke="#000"/></svg>
<div class="abs" style="left:54px;top:315px;width:6px;height:1px;background:repeating-linear-gradient(90deg,#808080 0 1px,transparent 1px 2px)"></div>
<svg class="abs" style="left:62px;top:307px" width="14" height="16" viewBox="0 0 14 16" ><path d="M.500 .500h7l4 4v9.500h-11z" fill="#fff" stroke="#000"/><path d="M7.500 .500v4h4" fill="none" stroke="#000"/><path d="M12.500 5v10h-11" fill="none" stroke="#000" stroke-opacity=".75"/><path d="M2 9.500h8M2 11.500h8" stroke="#000" stroke-dasharray="1 1"/><path d="M5 2h2v3h2l-3 3l-3-3h2z" fill="#10108a"/></svg>
<div class="tr" style="left:80px;top:305px">diskio.c</div>
<div class="abs" style="left:49px;top:335px;width:11px;height:1px;background:repeating-linear-gradient(90deg,#808080 0 1px,transparent 1px 2px)"></div>
<svg class="abs" style="left:62px;top:327px" width="14" height="16" viewBox="0 0 14 16" ><path d="M.500 .500h7l4 4v9.500h-11z" fill="#fff" stroke="#000"/><path d="M7.500 .500v4h4" fill="none" stroke="#000"/><path d="M12.500 5v10h-11" fill="none" stroke="#000" stroke-opacity=".75"/><path d="M2 9.500h8M2 11.500h8" stroke="#000" stroke-dasharray="1 1"/></svg>
<div class="tr" style="left:80px;top:325px">diskio.h</div>
<svg class="abs" style="left:44px;top:351px" width="9" height="9" viewBox="0 0 9 9" ><rect x=".500" y=".500" width="8" height="8" fill="#fff" stroke="#848484"/><path d="M2 4.500h5" stroke="#000"/><path d="M4.500 2v5" stroke="#000"/></svg>
<div class="abs" style="left:54px;top:355px;width:6px;height:1px;background:repeating-linear-gradient(90deg,#808080 0 1px,transparent 1px 2px)"></div>
<svg class="abs" style="left:62px;top:347px" width="14" height="16" viewBox="0 0 14 16" ><path d="M.500 .500h7l4 4v9.500h-11z" fill="#fff" stroke="#000"/><path d="M7.500 .500v4h4" fill="none" stroke="#000"/><path d="M12.500 5v10h-11" fill="none" stroke="#000" stroke-opacity=".75"/><path d="M2 9.500h8M2 11.500h8" stroke="#000" stroke-dasharray="1 1"/><path d="M5 2h2v3h2l-3 3l-3-3h2z" fill="#10108a"/></svg>
<div class="tr" style="left:80px;top:345px">ff.c</div>
<div class="abs" style="left:49px;top:375px;width:11px;height:1px;background:repeating-linear-gradient(90deg,#808080 0 1px,transparent 1px 2px)"></div>
<svg class="abs" style="left:62px;top:367px" width="14" height="16" viewBox="0 0 14 16" ><path d="M.500 .500h7l4 4v9.500h-11z" fill="#fff" stroke="#000"/><path d="M7.500 .500v4h4" fill="none" stroke="#000"/><path d="M12.500 5v10h-11" fill="none" stroke="#000" stroke-opacity=".75"/><path d="M2 9.500h8M2 11.500h8" stroke="#000" stroke-dasharray="1 1"/></svg>
<div class="tr" style="left:80px;top:365px;background:#ececec;padding:0 2px;margin-left:-2px">ff.h</div>
<div class="abs" style="left:49px;top:395px;width:11px;height:1px;background:repeating-linear-gradient(90deg,#808080 0 1px,transparent 1px 2px)"></div>
<svg class="abs" style="left:62px;top:387px" width="14" height="16" viewBox="0 0 14 16" ><path d="M.500 .500h7l4 4v9.500h-11z" fill="#fff" stroke="#000"/><path d="M7.500 .500v4h4" fill="none" stroke="#000"/><path d="M12.500 5v10h-11" fill="none" stroke="#000" stroke-opacity=".75"/><path d="M2 9.500h8M2 11.500h8" stroke="#000" stroke-dasharray="1 1"/></svg>
<div class="tr" style="left:80px;top:385px">ffconf.h</div>
<div class="abs" style="left:49px;top:415px;width:11px;height:1px;background:repeating-linear-gradient(90deg,#808080 0 1px,transparent 1px 2px)"></div>
<svg class="abs" style="left:62px;top:407px" width="14" height="16" viewBox="0 0 14 16" ><path d="M.500 .500h7l4 4v9.500h-11z" fill="#fff" stroke="#000"/><path d="M7.500 .500v4h4" fill="none" stroke="#000"/><path d="M12.500 5v10h-11" fill="none" stroke="#000" stroke-opacity=".75"/><path d="M2 9.500h8M2 11.500h8" stroke="#000" stroke-dasharray="1 1"/></svg>
<div class="tr" style="left:80px;top:405px">integer.h</div>
<svg class="abs" style="left:44px;top:431px" width="9" height="9" viewBox="0 0 9 9" ><rect x=".500" y=".500" width="8" height="8" fill="#fff" stroke="#848484"/><path d="M2 4.500h5" stroke="#000"/><path d="M4.500 2v5" stroke="#000"/></svg>
<div class="abs" style="left:54px;top:435px;width:6px;height:1px;background:repeating-linear-gradient(90deg,#808080 0 1px,transparent 1px 2px)"></div>
<svg class="abs" style="left:62px;top:427px" width="14" height="16" viewBox="0 0 14 16" ><path d="M.500 .500h7l4 4v9.500h-11z" fill="#fff" stroke="#000"/><path d="M7.500 .500v4h4" fill="none" stroke="#000"/><path d="M12.500 5v10h-11" fill="none" stroke="#000" stroke-opacity=".75"/><path d="M2 9.500h8M2 11.500h8" stroke="#000" stroke-dasharray="1 1"/><path d="M5 2h2v3h2l-3 3l-3-3h2z" fill="#10108a"/></svg>
<div class="tr" style="left:80px;top:425px">cc936.c</div>
<div class="vl" style="left:1343px;top:83px;height:24px;background:#b0b0b0"></div>
<div class="vl" style="left:235px;top:83px;height:625px;background:#e0e0e0"></div>
<div class="abs" style="left:236px;top:106px;width:62px;height:1px;background:#a8a8a8"></div>
<svg class="abs" style="left:236px;top:84px" width="400" height="23" viewBox="0 0 400 23"><path d="M300.5 22V8L306.5 2.500Q307.5 1.500 309.5 1.500H381.5Q383.5 1.500 383.5 3.500V22z" fill="#a9c2da" stroke="#b8b8b8"/><path d="M219.5 22V8L225.5 2.500Q226.5 1.500 228.5 1.500H298.5Q300.5 1.500 300.5 3.500V22z" fill="#ffdb79" stroke="#b8b8b8"/><path d="M136.5 22V8L142.5 2.500Q143.5 1.500 145.5 1.500H216.5Q218.5 1.500 218.5 3.500V22z" fill="#bfcfa3" stroke="#b8b8b8"/><path d="M5.5 22L23.5 3Q25 1.500 27.5 1.500H74.5Q76.5 1.500 76.5 3.500V22z" fill="#bca8e0" stroke="#b8b8b8"/><path d="M62.5 22L80.5 3Q82 1.500 84.5 1.500H133.5Q135.5 1.500 135.5 3.500V22z" fill="#f2a0a0" stroke="#b8b8b8"/></svg>
<svg class="abs" style="left:265px;top:88px" width="14" height="16" viewBox="0 0 14 16" ><path d="M.500 .500h7l4 4v9.500h-11z" fill="#fff" stroke="#000"/><path d="M7.500 .500v4h4" fill="none" stroke="#000"/><path d="M12.500 5v10h-11" fill="none" stroke="#000" stroke-opacity=".75"/><path d="M2 9.500h8M2 11.500h8" stroke="#000" stroke-dasharray="1 1"/><path d="M5 2h2v3h2l-3 3l-3-3h2z" fill="#10108a"/></svg>
<svg class="abs" style="left:323px;top:88px" width="14" height="16" viewBox="0 0 14 16" ><path d="M.500 .500h7l4 4v9.500h-11z" fill="#fff" stroke="#000"/><path d="M7.500 .500v4h4" fill="none" stroke="#000"/><path d="M12.500 5v10h-11" fill="none" stroke="#000" stroke-opacity=".75"/><path d="M2 9.500h8M2 11.500h8" stroke="#000" stroke-dasharray="1 1"/></svg>
<svg class="abs" style="left:383px;top:88px" width="14" height="16" viewBox="0 0 14 16" ><path d="M.500 .500h7l4 4v9.500h-11z" fill="#fff" stroke="#000"/><path d="M7.500 .500v4h4" fill="none" stroke="#000"/><path d="M12.500 5v10h-11" fill="none" stroke="#000" stroke-opacity=".75"/><path d="M2 9.500h8M2 11.500h8" stroke="#000" stroke-dasharray="1 1"/></svg>
<svg class="abs" style="left:466px;top:88px" width="14" height="16" viewBox="0 0 14 16" ><path d="M.500 .500h7l4 4v9.500h-11z" fill="#fff" stroke="#000"/><path d="M7.500 .500v4h4" fill="none" stroke="#000"/><path d="M12.500 5v10h-11" fill="none" stroke="#000" stroke-opacity=".75"/><path d="M2 9.500h8M2 11.500h8" stroke="#000" stroke-dasharray="1 1"/><path d="M5 2h2v3h2l-3 3l-3-3h2z" fill="#10108a"/></svg>
<svg class="abs" style="left:547px;top:88px" width="14" height="16" viewBox="0 0 14 16" ><path d="M.500 .500h7l4 4v9.500h-11z" fill="#fff" stroke="#000"/><path d="M7.500 .500v4h4" fill="none" stroke="#000"/><path d="M12.500 5v10h-11" fill="none" stroke="#000" stroke-opacity=".75"/><path d="M2 9.500h8M2 11.500h8" stroke="#000" stroke-dasharray="1 1"/></svg>
<div class="abs" style="left:284px;top:89px;font-size:12px;line-height:14px;white-space:nowrap">ff.c</div>
<div class="abs" style="left:343px;top:89px;font-size:12px;line-height:14px;white-space:nowrap;font-weight:bold;letter-spacing:-.3px">ff.h</div>
<div class="abs" style="left:405px;top:89px;font-size:12px;line-height:14px;white-space:nowrap">diskio.h</div>
<div class="abs" style="left:488px;top:89px;font-size:12px;line-height:14px;white-space:nowrap">diskio.c</div>
<div class="abs" style="left:568px;top:89px;font-size:12px;line-height:14px;white-space:nowrap">ffconf.h</div>
<div class="abs" style="left:340px;top:104px;width:26px;height:2px;background:#000"></div>
<div class="abs" style="left:1307px;top:93px;width:0;height:0;border:5px solid transparent;border-top:5px solid #000;border-bottom:0"></div>
<svg class="abs" style="left:1327px;top:91px" width="9" height="8" viewBox="0 0 9 8" ><path d="M1 .500l7 7M8 .500l-7 7" stroke="#000" stroke-width="1.600"/></svg>
<div class="abs" style="left:1323px;top:110px;width:18px;height:600px;background:#f0f0f0"></div>
<svg class="abs" style="left:1327px;top:114px" width="9" height="7" viewBox="0 0 9 7" ><path d="M1 5.500L4.500 2L8 5.500" fill="none" stroke="#505050" stroke-width="1.800"/></svg>
<svg class="abs" style="left:1327px;top:696px" width="9" height="7" viewBox="0 0 9 7" ><path d="M1 1.500L4.500 5L8 1.500" fill="none" stroke="#505050" stroke-width="1.800"/></svg>
<div class="abs" style="left:1324px;top:530px;width:14px;height:44px;background:#cdcdcd"></div>
<svg class="abs" style="left:320px;top:325px" width="11" height="11" viewBox="0 0 11 11" ><rect x=".500" y=".500" width="10" height="10" fill="#fff" stroke="#808080"/><path d="M2.500 5.500h6" stroke="#707070"/></svg>
<svg class="abs" style="left:320px;top:430px" width="11" height="11" viewBox="0 0 11 11" ><rect x=".500" y=".500" width="10" height="10" fill="#fff" stroke="#808080"/><path d="M2.500 5.500h6" stroke="#707070"/></svg>
<svg class="abs" style="left:320px;top:514px" width="11" height="11" viewBox="0 0 11 11" ><rect x=".500" y=".500" width="10" height="10" fill="#fff" stroke="#808080"/><path d="M2.500 5.500h6" stroke="#707070"/></svg>
<svg class="abs" style="left:320px;top:682px" width="11" height="11" viewBox="0 0 11 11" ><rect x=".500" y=".500" width="10" height="10" fill="#fff" stroke="#808080"/><path d="M2.500 5.500h6" stroke="#707070"/></svg>
<div class="abs" style="left:326px;top:225px;width:5px;height:1px;background:#9a9a9a"></div>
<div class="abs" style="left:326px;top:393px;width:5px;height:1px;background:#9a9a9a"></div>
<div class="abs" style="left:326px;top:582px;width:5px;height:1px;background:#9a9a9a"></div>
<div class="abs" style="left:326px;top:645px;width:5px;height:1px;background:#9a9a9a"></div>
<svg class="abs" style="left:241px;top:321px" width="10" height="17" viewBox="0 0 10 17" ><path d="M1.500 1.500L8.500 8.500L1.500 15.500z" fill="#40f0f0" stroke="#1a5a78" stroke-width="1"/></svg>
<div class="abs" style="left:333px;top:616px;width:1px;height:18px;background:#000"></div>
<svg class="abs" style="left:0;top:0;shape-rendering:crispEdges" width="1366" height="708" viewBox="0 0 1366 708"><rect x="270" y="294" width="676" height="98" rx="9" fill="none" stroke="#f00" stroke-width="2"/><rect x="245" y="498.500" width="946" height="111" rx="9" fill="none" stroke="#f00" stroke-width="2"/><path d="M614 180H830Q840 180 840 190V211.500Q840 221.500 830 221.500H795.500L757 262L770 221.500H614Q604 221.500 604 211.500V190Q604 180 614 180z" fill="none" stroke="#f00" stroke-width="2" stroke-linejoin="miter"/></svg>
<div class="abs" style="left:617px;top:188px;font:600 19px/24px 'Liberation Serif','Noto Serif CJK SC',serif;letter-spacing:4px;color:#0000e0;white-space:nowrap">需要实现<span style="font-family:'Liberation Sans',sans-serif;font-size:20px;letter-spacing:0">3</span>个函数</div>
<div class="abs" style="left:1344px;top:83px;width:22px;height:625px;background:#f5f6f7"></div>
<div class="abs" style="left:1346px;top:87px;width:22px;height:120px;border:1px solid #b4b4b4;background:#f5f6f7"></div>
<div class="abs" style="left:1346px;top:221px;width:22px;height:90px;border:1px solid #b4b4b4;background:#f5f6f7"></div>
<svg class="abs" style="left:1350px;top:91px" width="15" height="13" viewBox="0 0 15 13" ><rect x=".500" y=".500" width="14" height="12" fill="#f4f8ff" stroke="#4060b0"/><rect x="1" y="1" width="13" height="2.500" fill="#6a90e8"/><path d="M3 5.500h4M8 5.500h4M3 7.500h6M3 9.500h3" stroke="#505868"/></svg>
<svg class="abs" style="left:1349px;top:224px" width="17" height="15" viewBox="0 0 17 15" ><rect x=".500" y="4.500" width="14" height="10" fill="#f4f8ff" stroke="#4060b0"/><path d="M2 7h5M2 9h4M2 11h5" stroke="#6080c0"/><path d="M9 1l3 3l-3 3l-3-3z" fill="#f0d020"/><path d="M13 3l3.500 3.500l-4 5l-3.500-3.500z" fill="#e060d0" stroke="#9030a0" stroke-width=".5"/><path d="M12 0l2.500 2.500L12 5z" fill="#30a0e0"/></svg>
<div class="abs" style="left:1361px;top:115px;font:11px/12px 'Liberation Mono',monospace;letter-spacing:-.6px;color:#333;white-space:nowrap;transform:rotate(90deg);transform-origin:0 0">Build Output</div>
<div class="abs" style="left:1361px;top:248px;font:11px/12px 'Liberation Mono',monospace;letter-spacing:-.6px;color:#333;white-space:nowrap;transform:rotate(90deg);transform-origin:0 0">Browser</div>
<svg class="abs" style="left:1210px;top:626px" width="148" height="40" viewBox="0 0 148 40"><defs><linearGradient id="ig" x1="0" y1="0" x2="0" y2="1"><stop offset="0" stop-color="#fdfeff"/><stop offset=".6" stop-color="#f4f7fb"/><stop offset="1" stop-color="#dfe6ee"/></linearGradient><linearGradient id="ibg" x1="0" y1="0" x2="1" y2="0"><stop offset="0" stop-color="#9a9c9a"/><stop offset=".5" stop-color="#d8dcdc"/><stop offset="1" stop-color="#eceeee"/></linearGradient></defs><rect x="38" y="13" width="108.500" height="26.500" rx="3" fill="#a9c8e8"/><rect x="39.500" y="15" width="105.500" height="23" rx="2" fill="url(#ig)"/><rect x=".5" y=".5" width="39" height="39" rx="4" fill="#a9c8e8"/><rect x="2.500" y="2.500" width="34.500" height="34.500" rx="2" fill="url(#ibg)"/><path d="M3 37V22l8-3l6-1h6l8 3l4 3v13z" fill="#15171a"/><ellipse cx="19" cy="11" rx="5" ry="6.500" fill="#7a6a5c"/><path d="M13 9c0-6 12-6 12 0c-3-3-9-3-12 0z" fill="#1a1a1a"/><path d="M5 3c3-1 7-1 9 1c-2 4-3 9-2 15l-7 3z" fill="#2a2c2c" opacity=".85"/><path d="M17.500 18l1.500 2l1.500-2l-.5 10h-2z" fill="#e8e8e8"/><path d="M18.500 19.500h1.500l.5 9l-1.200 1.500l-1.300-1.500z" fill="#101010"/><rect x="25" y="24" width="3" height="1" fill="#9aa"/><text x="46" y="33" font-family="Noto Sans CJK SC,sans-serif" font-weight="bold" font-size="13" fill="#3a6ea5">中</text><path d="M73.500 21A6.800 6.800 0 1 1 66 31.500A9 9 0 0 0 73.500 21z" fill="#3a6ea5"/><circle cx="88.500" cy="27.500" r="1.500" fill="none" stroke="#3a6ea5" stroke-width="1"/><circle cx="95" cy="27" r="1.800" fill="#3a6ea5"/><path d="M96.700 26.500c.5 2-.8 3.800-2.700 4.500c1-1 1.300-2 1-3z" fill="#3a6ea5"/><rect x="105" y="23" width="15" height="9.500" rx="2" fill="#3a6ea5"/><path d="M107 25.500h9M107 27.500h9" stroke="#fff" stroke-width="1" stroke-dasharray="1.300 1"/><path d="M108 30h6" stroke="#fff" stroke-width="1"/><rect x="116" y="24.500" width="2.500" height="3" fill="#3a6ea5"/><path d="M131.500 21.500c2.500-1 5 .5 5.500 2.500l-2.500-.3l-1 2l1.500 1.800c-1.500.8-3 .5-4-.2l-4.500 5.200c-1.200 1.200-3-.5-1.800-1.800l5.300-4.500c-.8-1.700-.3-3.500 1.500-4.700z" fill="#3a6ea5"/></svg>
</body></html>
